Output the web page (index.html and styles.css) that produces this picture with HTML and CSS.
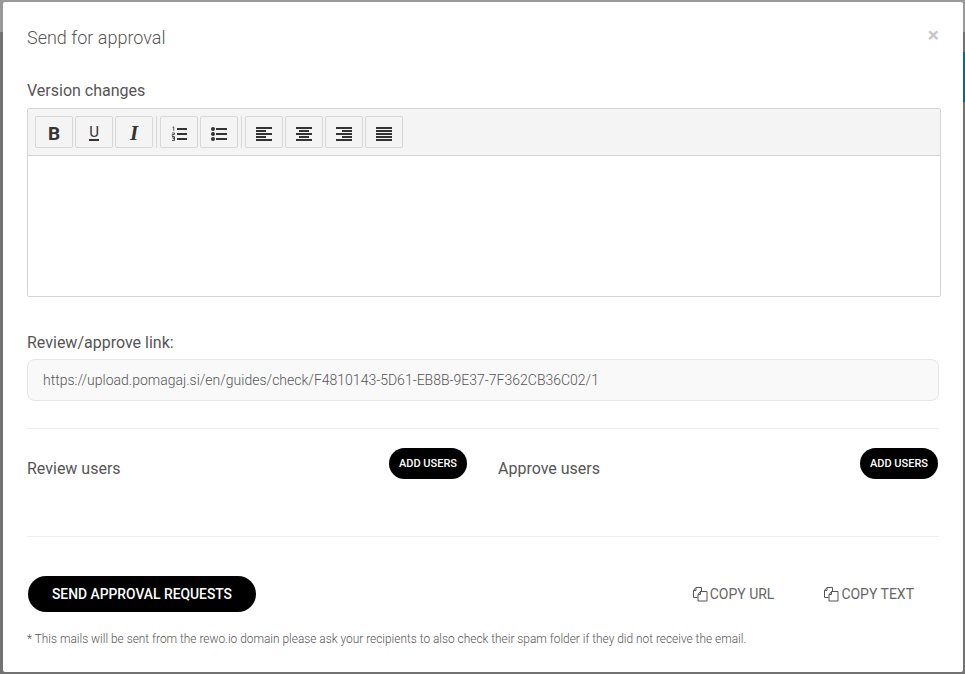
FILE: index.html
```html
<!DOCTYPE html>
<html lang="en">
<head>
<meta charset="utf-8">
<title>Send for approval</title>
<link rel="stylesheet" href="styles.css">
</head>
<body>
<div class="backdrop">
  <span class="strip-right"></span>
  <div class="modal">
    <header class="modal-head">
      <h1 class="modal-title">Send for approval</h1>
      <span class="close">×</span>
    </header>
    <label class="label label-version">Version changes</label>
    <div class="editor">
      <div class="toolbar">
        <div class="group">
          <button class="tool"><span class="glyph-b">B</span></button>
          <button class="tool"><span class="glyph-u">U</span></button>
          <button class="tool"><span class="glyph-i">I</span></button>
        </div>
        <div class="group">
          <button class="tool">
            <svg class="icon" width="16" height="18" viewBox="0 0 16 18"><path class="ink" d="M6 5h10v2H6zM6 10h10v2H6zM6 15h10v2H6z"/><path class="thin" fill="none" d="M1.500 4.500l1.200-.7v4M1 10h2.500v1.500H1.300V13.500h2.300M1 14h2.500v1.700H1.800h1.700v1.800H1"/></svg>
          </button>
          <button class="tool">
            <svg class="icon" width="16" height="18" viewBox="0 0 16 18"><path class="ink" d="M5 5h11v2H5zM5 10h11v2H5zM5 15h11v2H5z"/><circle class="ink" cx="2" cy="6" r="2"/><circle class="ink" cx="2" cy="11" r="2"/><circle class="ink" cx="2" cy="16" r="2"/></svg>
          </button>
        </div>
        <div class="group">
          <button class="tool">
            <svg class="icon" width="16" height="18" viewBox="0 0 16 18"><path class="ink" d="M0 4h16v2H0zM0 7h10v2H0zM0 10h16v2H0zM0 13h10v2H0zM0 16h16v2H0z"/></svg>
          </button>
          <button class="tool">
            <svg class="icon" width="16" height="18" viewBox="0 0 16 18"><path class="ink" d="M0 4h16v2H0zM3 7h10v2H3zM0 10h16v2H0zM3 13h10v2H3zM0 16h16v2H0z"/></svg>
          </button>
          <button class="tool">
            <svg class="icon" width="16" height="18" viewBox="0 0 16 18"><path class="ink" d="M0 4h16v2H0zM6 7h10v2H6zM0 10h16v2H0zM6 13h10v2H6zM0 16h16v2H0z"/></svg>
          </button>
          <button class="tool">
            <svg class="icon" width="16" height="18" viewBox="0 0 16 18"><path class="ink" d="M0 4h16v2H0zM0 7h16v2H0zM0 10h16v2H0zM0 13h16v2H0zM0 16h16v2H0z"/></svg>
          </button>
        </div>
      </div>
      <div class="editor-area"></div>
    </div>
    <label class="label label-link">Review/approve link:</label>
    <div class="link-field">https://upload.pomagaj.si/en/guides/check/F4810143-5D61-EB8B-9E37-7F362CB36C02/1</div>
    <div class="users">
      <section class="user-col">
        <span class="user-title">Review users</span>
        <button class="add-btn">ADD USERS</button>
      </section>
      <section class="user-col">
        <span class="user-title">Approve users</span>
        <button class="add-btn">ADD USERS</button>
      </section>
    </div>
    <div class="actions">
      <button class="send-btn">SEND APPROVAL REQUESTS</button>
      <div class="copy-group">
        <button class="copy-btn">
          <svg width="15" height="15" viewBox="0 0 15 15"><path class="copy-icon" d="M4.500 10.500H.5V3.500L3 .5H8.500V4.500M3 .5V3.500H.5M5 14V7.500L7.500 4.500H14V14H5ZM7.500 4.500V7.500H5"/></svg>
          COPY URL
        </button>
        <button class="copy-btn">
          <svg width="15" height="15" viewBox="0 0 15 15"><path class="copy-icon" d="M4.500 10.500H.5V3.500L3 .5H8.500V4.500M3 .5V3.500H.5M5 14V7.500L7.500 4.500H14V14H5ZM7.500 4.500V7.500H5"/></svg>
          COPY TEXT
        </button>
      </div>
    </div>
    <p class="note">* This mails will be sent from the rewo.io domain please ask your recipients to also check their spam folder if they did not receive the email.</p>
  </div>
</div>
</body>
</html>
```

FILE: styles.css
```css
* { box-sizing: border-box; }
html, body { margin: 0; height: 100%; overflow: hidden; }
body { font-family: Roboto, "Liberation Sans", sans-serif; color: #555; }
button { font-family: inherit; cursor: pointer; }

.backdrop {
  position: relative;
  width: 965px;
  height: 674px;
  padding: 2px 2px 2px 3px;
  background: linear-gradient(#999 32px, #727272 32px);
}
.strip-right { position: absolute; right: 0; top: 52px; width: 2px; height: 50px; background: #0d6a78; }

.modal {
  position: relative;
  height: 670px;
  padding: 0 24px;
  background: #fff;
  border-radius: 2px;
}
.modal-head {
  display: flex;
  justify-content: space-between;
  align-items: center;
  height: 72px;
}
.modal-title { margin: -2px 0 0; font-size: 18px; font-weight: 300; color: #555; }
.close { font-size: 21px; font-weight: 700; color: #c8c8c8; line-height: 1; margin-top: -6px; }

.label { display: block; font-size: 16px; line-height: 20px; color: #555; }
.label-version { margin-top: 7px; margin-bottom: 7px; }
.label-link { margin-top: 36px; margin-bottom: 6px; }

.editor {
  width: 914px;
  height: 189px;
  border: 1px solid #d4d4d4;
  border-radius: 2px;
}
.toolbar {
  display: flex;
  height: 47px;
  padding: 7px 7px 0;
  background: #f4f4f4;
  border-bottom: 1px solid #d4d4d4;
}
.group { display: flex; gap: 2px; height: 32px; }
.group + .group { margin-left: 3px; padding-left: 3px; border-left: 1px solid #d8d8d8; }
.tool {
  display: flex;
  align-items: center;
  justify-content: center;
  width: 38px;
  height: 32px;
  padding: 0;
  color: #333;
  background: #f4f4f4;
  border: 1px solid #d8d8d8;
  border-radius: 2px;
}
.glyph-b { font-size: 19px; line-height: 1; font-weight: 700; margin-top: 2px; }
.glyph-u { font-size: 15px; line-height: 12px; border-bottom: 2px solid #333; padding-bottom: 1px; margin-top: 2px; }
.glyph-i { font-family: "Liberation Serif", serif; font-size: 21px; line-height: 1; font-weight: 700; font-style: italic; margin-top: 2px; }
.icon { display: block; }
.ink { fill: #333; }
.thin { stroke: #333; stroke-width: .8; }

.link-field {
  display: flex;
  align-items: center;
  width: 912px;
  height: 42px;
  padding: 0 15px;
  font-size: 14px;
  font-weight: 300;
  color: #555;
  background: #f9f9f9;
  border: 1px solid #e6e6e6;
  border-radius: 8px;
}

.users {
  display: flex;
  gap: 31px;
  width: 912px;
  height: 109px;
  margin-top: 27px;
  padding-top: 19px;
  border-top: 1px solid #eee;
  border-bottom: 1px solid #eee;
}
.user-col {
  display: flex;
  justify-content: space-between;
  align-items: flex-start;
  width: 440px;
}
.user-title { margin-top: 11px; font-size: 16px; line-height: 20px; color: #555; }
.add-btn {
  width: 78px;
  height: 31px;
  padding: 0;
  font-size: 11px;
  font-weight: 500;
  color: #fff;
  background: #000;
  border: 0;
  border-radius: 16px;
}

.actions {
  display: flex;
  justify-content: space-between;
  align-items: center;
  width: 912px;
  height: 36px;
  margin-top: 39px;
}
.send-btn {
  width: 228px;
  height: 36px;
  margin-left: 1px;
  padding: 0;
  font-size: 13.85px;
  font-weight: 500;
  color: #fff;
  background: #000;
  border: 0;
  border-radius: 18px;
}
.copy-group { display: flex; gap: 50px; padding-right: 25px; }
.copy-btn {
  display: flex;
  align-items: center;
  gap: 2px;
  padding: 0;
  font-size: 14px;
  color: #666;
  background: none;
  border: 0;
}
.copy-icon { fill: none; stroke: #555; stroke-width: 1; }

.note { margin: 20px 0 0; font-size: 11.9px; line-height: 14px; font-weight: 300; color: #555; }
```
